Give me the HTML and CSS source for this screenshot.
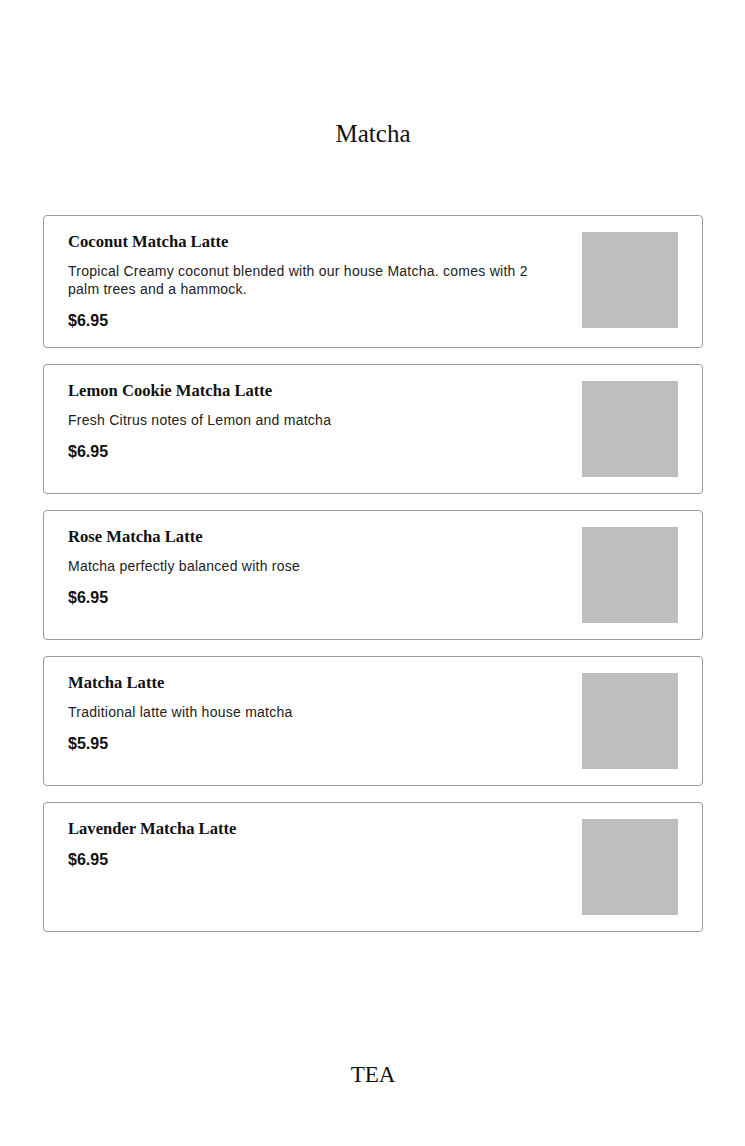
FILE: index.html
```html
<!DOCTYPE html>
<html lang="en">
<head>
<meta charset="utf-8">
<title>Matcha</title>
<link rel="stylesheet" href="styles.css">
</head>
<body>
<main class="page">
  <section class="menu-section">
    <h2 class="section-title">Matcha</h2>
    <ul class="items">
      <li class="item">
        <div class="item-text">
          <h3 class="item-name">Coconut Matcha Latte</h3>
          <p class="item-desc">Tropical Creamy coconut blended with our house Matcha. comes with 2 palm trees and a hammock.</p>
          <p class="item-price">$6.95</p>
        </div>
        <div class="item-img"></div>
      </li>
      <li class="item">
        <div class="item-text">
          <h3 class="item-name">Lemon Cookie Matcha Latte</h3>
          <p class="item-desc">Fresh Citrus notes of Lemon and matcha</p>
          <p class="item-price">$6.95</p>
        </div>
        <div class="item-img"></div>
      </li>
      <li class="item">
        <div class="item-text">
          <h3 class="item-name">Rose Matcha Latte</h3>
          <p class="item-desc">Matcha perfectly balanced with rose</p>
          <p class="item-price">$6.95</p>
        </div>
        <div class="item-img"></div>
      </li>
      <li class="item">
        <div class="item-text">
          <h3 class="item-name">Matcha Latte</h3>
          <p class="item-desc">Traditional latte with house matcha</p>
          <p class="item-price">$5.95</p>
        </div>
        <div class="item-img"></div>
      </li>
      <li class="item">
        <div class="item-text">
          <h3 class="item-name">Lavender Matcha Latte</h3>
          <p class="item-price">$6.95</p>
        </div>
        <div class="item-img"></div>
      </li>
    </ul>
  </section>
  <section class="menu-section next">
    <h2 class="section-title small">TEA</h2>
  </section>
</main>
</body>
</html>
```

FILE: styles.css
```css
* { box-sizing: border-box; }
html, body { margin: 0; padding: 0; background: #fff; }
body {
  font-family: "Liberation Sans", "Noto Sans", sans-serif;
  color: #111;
}
.page {
  width: 745px;
  padding: 0 42px 0 43px;
}
.menu-section {
  padding-top: 115px;
}
.section-title {
  margin: 0;
  text-align: center;
  font-family: "Liberation Serif", "DejaVu Serif", serif;
  font-weight: normal;
  font-size: 25px;
  line-height: 38px;
  color: #111;
}
.section-title.small {
  font-size: 23px;
}
.items {
  list-style: none;
  margin: 62px 0 0;
  padding: 0;
  display: flex;
  flex-direction: column;
  gap: 16px;
}
.item {
  display: flex;
  gap: 24px;
  border: 1px solid #9a9a9a;
  border-radius: 4px;
  padding: 16px 24px 16px 24px;
}
.item-text {
  flex: 1;
  min-width: 0;
}
.item-name {
  margin: 0 0 10px;
  font-family: "Liberation Serif", "DejaVu Serif", serif;
  font-weight: bold;
  font-size: 16.6px;
  line-height: 20px;
  color: #111;
}
.item-desc {
  margin: 0 0 12px;
  font-size: 14px;
  line-height: 18px;
  letter-spacing: 0.25px;
  color: #222;
}
.item-price {
  margin: 0;
  font-weight: bold;
  font-size: 16px;
  line-height: 21px;
  color: #111;
}
.item-img {
  flex: 0 0 96px;
  width: 96px;
  height: 96px;
  background: #bebebe;
}
.next {
  padding-top: 124px;
}
```
